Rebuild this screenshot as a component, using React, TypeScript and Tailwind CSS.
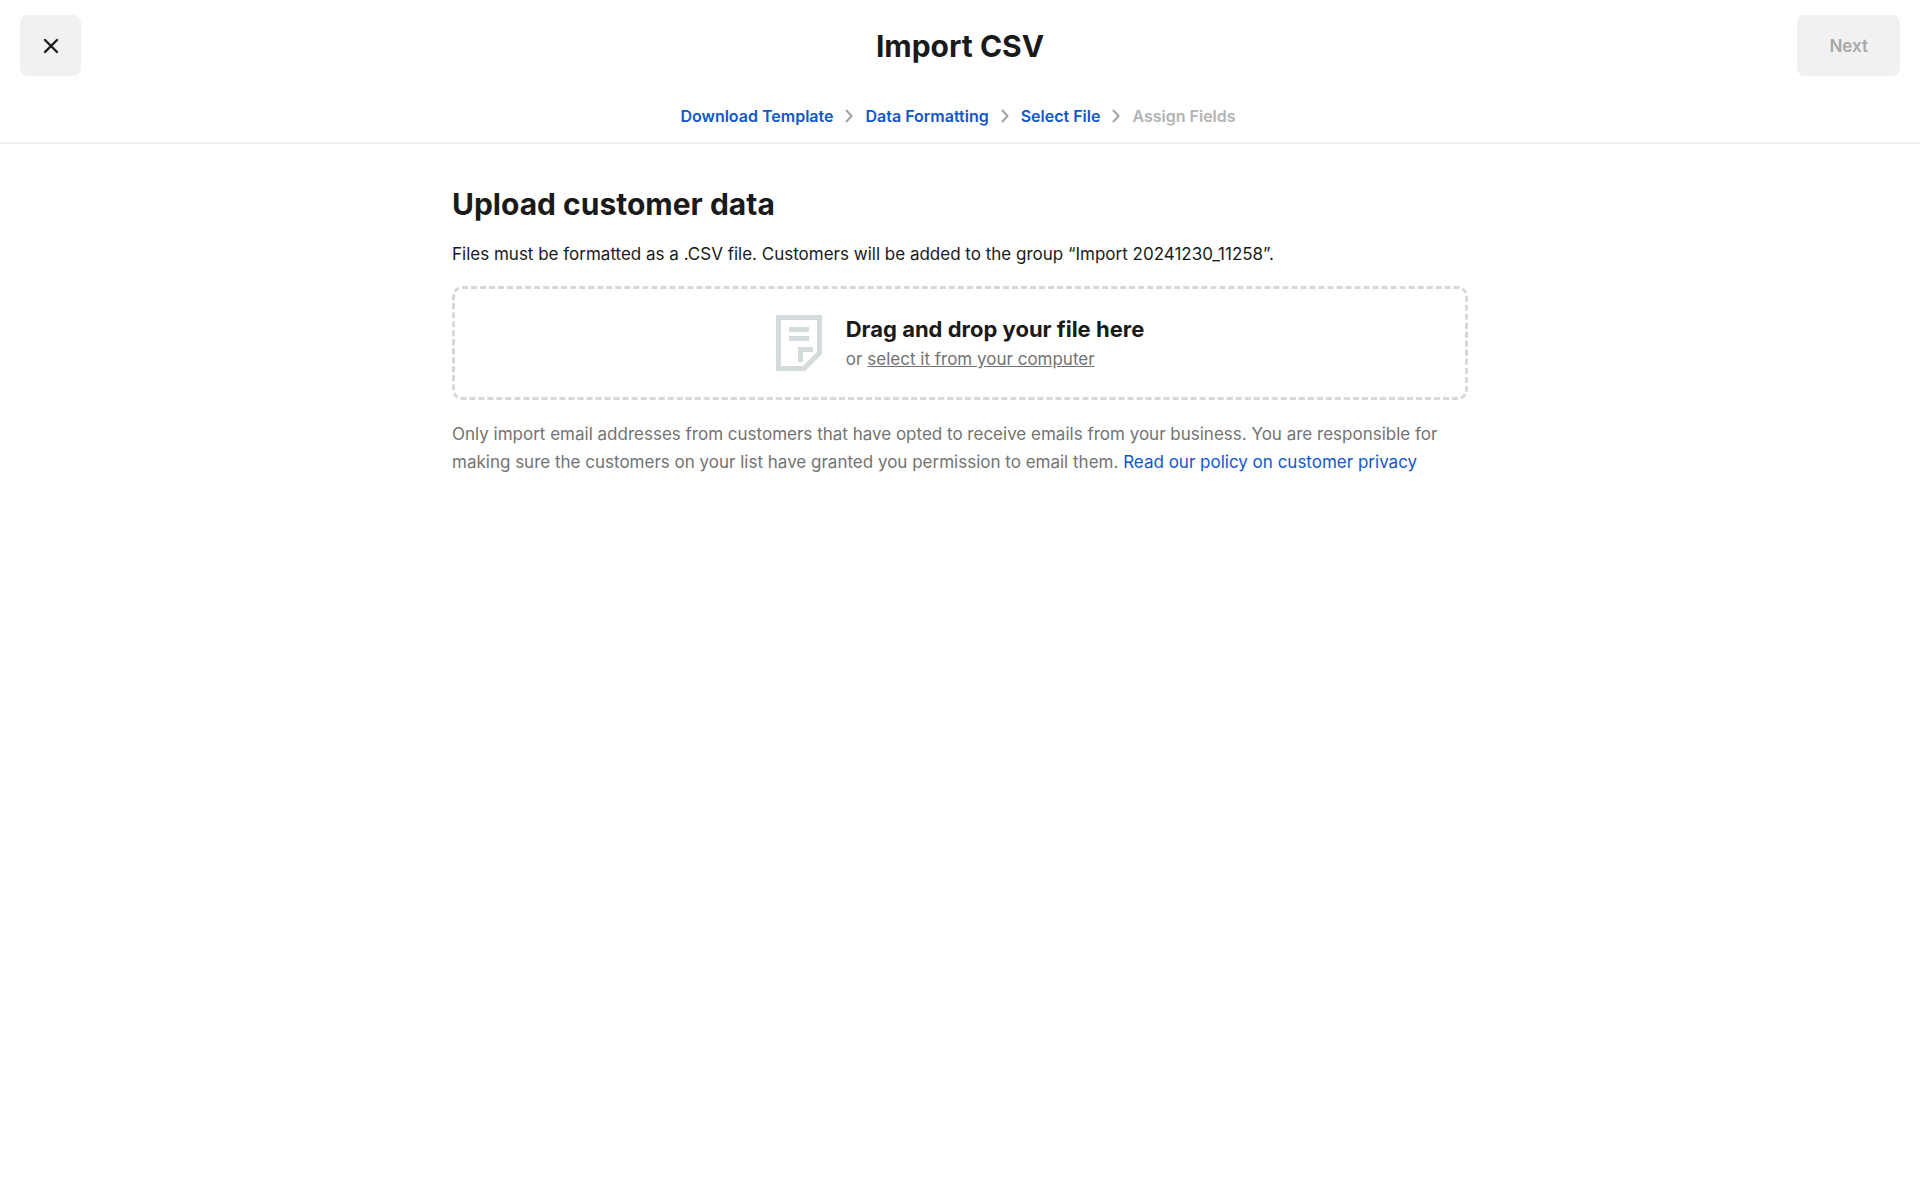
import { Fragment } from "react";

const steps = [
  { label: "Download Template", enabled: true },
  { label: "Data Formatting", enabled: true },
  { label: "Select File", enabled: true },
  { label: "Assign Fields", enabled: false },
];

function CloseIcon() {
  return (
    <svg width="16" height="16" viewBox="0 0 16 16" fill="none" stroke="currentColor" strokeWidth="2.4" strokeLinecap="round" aria-hidden="true">
      <path d="M2 2l12 12M14 2L2 14" />
    </svg>
  );
}

function ChevronIcon() {
  return (
    <svg className="text-[#a3a3a3]" width="8" height="14" viewBox="0 0 8 14" fill="none" stroke="currentColor" strokeWidth="2" strokeLinecap="round" strokeLinejoin="round" aria-hidden="true">
      <path d="M1.5 1.5L6.5 7L1.5 12.5" />
    </svg>
  );
}

function DocumentIcon() {
  return (
    <svg className="shrink-0 text-[#d5dadc]" width="46" height="56" viewBox="0 0 46 56" fill="none" aria-hidden="true">
      <path d="M2.5 2.5H43.5V38L28 53.5H2.5Z" stroke="currentColor" strokeWidth="5" />
      <path d="M13 12h20v5H13zM13 21h20v5H13zM22 32h15v5H27v10h-5z" fill="currentColor" />
    </svg>
  );
}

function Header() {
  return (
    <header className="border-b-2 border-[#f2f2f2]">
      <div className="grid grid-cols-[1fr_auto_1fr] items-center px-5 pt-[15px]">
        <button type="button" aria-label="Close" className="flex h-[61px] w-[61px] items-center justify-center rounded-lg bg-[#f1f1f1] text-[#1a1a1a]">
          <CloseIcon />
        </button>
        <h1 className="text-[30px] leading-10 font-[650]">Import CSV</h1>
        <button type="button" disabled className="h-[61px] justify-self-end rounded-lg bg-[#f1f1f1] px-8 text-[17px] leading-7 font-semibold text-[#a8a8a8]">
          Next
        </button>
      </div>
      <nav aria-label="Import steps" className="flex items-center justify-center gap-3 pt-7 pr-1 pb-3.5 text-base leading-6 font-semibold">
        {steps.map((step, i) => (
          <Fragment key={step.label}>
            {i > 0 && <ChevronIcon />}
            {step.enabled ? (
              <a href="#" className="text-[#1057c9]">{step.label}</a>
            ) : (
              <span className="text-[#b3b3b3]">{step.label}</span>
            )}
          </Fragment>
        ))}
      </nav>
    </header>
  );
}

export default function App() {
  return (
    <div className="bg-white font-['Inter',sans-serif] text-[#1a1a1a]">
      <Header />
      <main className="mx-auto max-w-[1016px] pt-10">
        <h2 className="text-[30px] leading-10 font-[650]">Upload customer data</h2>
        <p className="pt-4 text-[17px] leading-7">
          Files must be formatted as a .CSV file. Customers will be added to the group “Import 20241230_11258”.
        </p>
        <section className="mt-[18px] flex items-center justify-center gap-6 rounded-[10px] border-3 border-dashed border-[#d8d8d8] py-6">
          <DocumentIcon />
          <div>
            <h3 className="text-[22px] leading-8 font-bold">Drag and drop your file here</h3>
            <div className="flex gap-[5px] text-[17px] leading-7 text-[#737373]">
              <span>or</span>
              <label htmlFor="csv-file" className="cursor-pointer underline">
                select it from your computer
              </label>
              <input id="csv-file" type="file" accept=".csv" className="hidden" />
            </div>
          </div>
        </section>
        <p className="pt-5 text-[17px] leading-7 text-[#737373]">
          Only import email addresses from customers that have opted to receive emails from your business. You are responsible for making sure the customers on your list have granted you permission to email them.{" "}
          <a href="#" className="text-[#1057c9]">Read our policy on customer privacy</a>
        </p>
      </main>
    </div>
  );
}
